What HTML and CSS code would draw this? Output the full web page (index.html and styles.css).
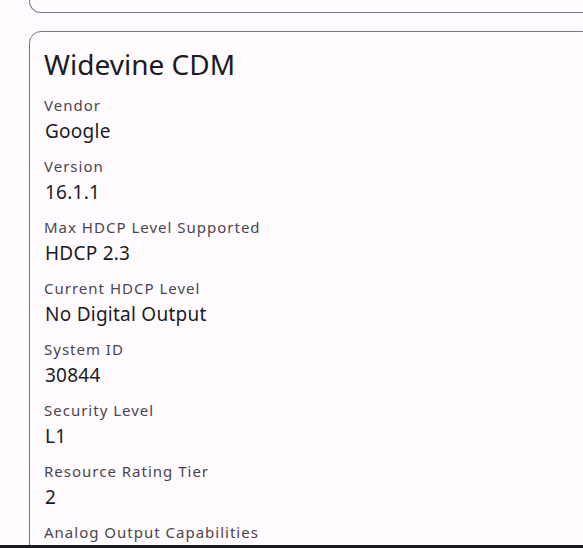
FILE: index.html
```html
<!DOCTYPE html>
<html lang="en">
<head>
    <meta charset="UTF-8">
    <meta name="viewport" content="width=device-width, initial-scale=1.0">
    <title>DRM Info</title>
    <link rel="stylesheet" href="styles.css">
</head>
<body>
    <div class="card card-cut"></div>

    <div class="card">
        <h2 class="card-title">Widevine CDM</h2>
        <div class="field">
            <div class="field-label">Vendor</div>
            <div class="field-value">Google</div>
        </div>
        <div class="field">
            <div class="field-label">Version</div>
            <div class="field-value">16.1.1</div>
        </div>
        <div class="field">
            <div class="field-label">Max HDCP Level Supported</div>
            <div class="field-value">HDCP 2.3</div>
        </div>
        <div class="field">
            <div class="field-label">Current HDCP Level</div>
            <div class="field-value">No Digital Output</div>
        </div>
        <div class="field">
            <div class="field-label">System ID</div>
            <div class="field-value">30844</div>
        </div>
        <div class="field">
            <div class="field-label">Security Level</div>
            <div class="field-value">L1</div>
        </div>
        <div class="field">
            <div class="field-label">Resource Rating Tier</div>
            <div class="field-value">2</div>
        </div>
        <div class="field">
            <div class="field-label">Analog Output Capabilities</div>
            <div class="field-value">None</div>
        </div>
    </div>

    <div class="nav-edge"></div>
</body>
</html>
```

FILE: styles.css
```css
html, body {
    margin: 0;
    overflow: hidden;
}
body {
    font-family: 'Noto Sans', sans-serif;
    background: #fffbfe;
    color: #1c1b1f;
}
.card {
    margin: 0 0 18px 29px;
    width: 565px;
    box-sizing: border-box;
    border: 1px solid #79747e;
    border-radius: 12px;
    padding: 14px 14px 16px;
}
.card-cut {
    height: 13px;
    padding: 0;
    border-top: none;
    border-radius: 0 0 12px 12px;
}
.card-title {
    margin: 0 0 13px;
    font-size: 28px;
    font-weight: 400;
    line-height: 36px;
}
.field {
    margin-bottom: 9px;
}
.field-label {
    font-size: 15px;
    line-height: 21px;
    letter-spacing: 1px;
    color: #49454f;
}
.field-value {
    font-size: 19px;
    line-height: 31px;
    letter-spacing: 0.25px;
    padding-left: 1px;
}
.nav-edge {
    position: fixed;
    left: 0;
    right: 0;
    bottom: 0;
    height: 3px;
    background: #1c1b1f;
}
```
